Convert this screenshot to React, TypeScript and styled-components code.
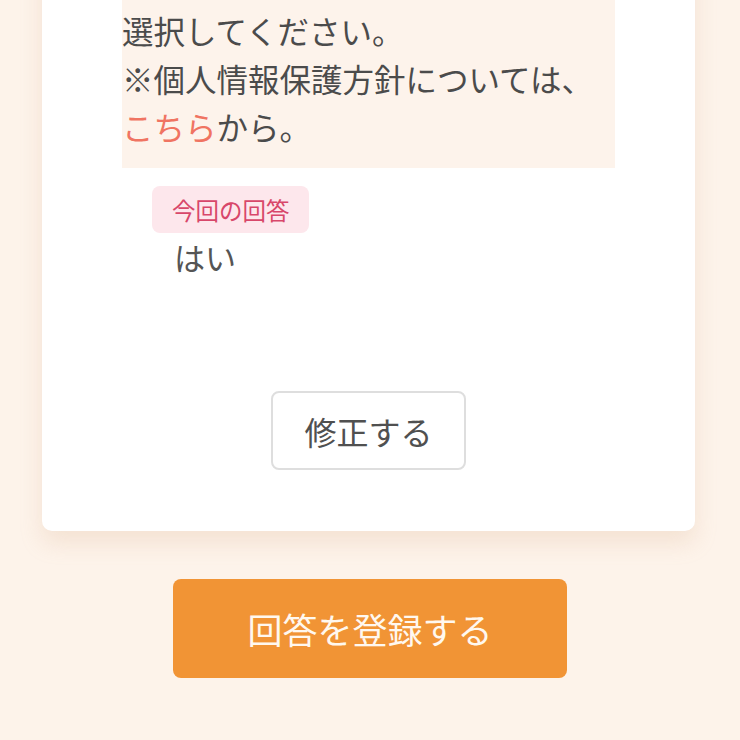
import * as React from "react";
import styled, { createGlobalStyle } from "styled-components";

const GlobalStyle = createGlobalStyle`
  html, body {
    margin: 0;
    padding: 0;
    background: #fdf3ea;
  }
  body {
    font-family: "Noto Sans CJK JP", "Noto Sans", sans-serif;
    color: #4b4b4b;
  }
`;

const Page = styled.main`
  width: 740px;
  height: 740px;
  overflow: hidden;
  display: flex;
  flex-direction: column;
  align-items: center;
`;

const Card = styled.section`
  box-sizing: border-box;
  width: 653px;
  margin-top: -62px;
  margin-left: -3px;
  padding: 0 80px 61px;
  background: #fff;
  border-radius: 0 0 10px 10px;
  box-shadow: 0 12px 22px rgba(214, 170, 130, 0.22);
  display: flex;
  flex-direction: column;
`;

const Notice = styled.div`
  background: #fdf3eb;
  padding: 20px 0 18px;
  font-size: 31.5px;
  line-height: 48px;
  color: #4b4b4b;
  white-space: nowrap;
`;

const Link = styled.a`
  color: #f07462;
  text-decoration: none;
`;

const Answer = styled.div`
  margin-top: 18px;
  display: flex;
  flex-direction: column;
  align-items: flex-start;
`;

const Badge = styled.span`
  margin-left: 30px;
  height: 47px;
  padding: 0 19px 0 20px;
  display: inline-flex;
  align-items: center;
  background: #fde7ec;
  color: #d8476a;
  font-size: 23.5px;
  border-radius: 8px;
`;

const AnswerText = styled.p`
  margin: 0 0 0 52px;
  font-size: 31px;
  line-height: 48px;
  color: #555;
`;

const EditButton = styled.button`
  align-self: center;
  margin-top: 110px;
  width: 195px;
  height: 79px;
  background: #fff;
  border: 2px solid #dedede;
  border-radius: 8px;
  font-family: inherit;
  font-size: 32px;
  color: #505050;
`;

const SubmitButton = styled.button`
  margin-top: 48px;
  width: 394px;
  height: 99px;
  background: #f19435;
  border: none;
  border-radius: 8px;
  font-family: inherit;
  font-size: 35px;
  color: #fff8ef;
`;

export default function App() {
  return (
    <>
      <GlobalStyle />
      <Page>
        <Card>
          <Notice>
            個人情報の取り扱いに同意の上、
            <br />
            選択してください。
            <br />
            ※個人情報保護方針については、
            <br />
            <Link href="#">こちら</Link>から。
          </Notice>
          <Answer>
            <Badge>今回の回答</Badge>
            <AnswerText>はい</AnswerText>
          </Answer>
          <EditButton>修正する</EditButton>
        </Card>
        <SubmitButton>回答を登録する</SubmitButton>
      </Page>
    </>
  );
}
